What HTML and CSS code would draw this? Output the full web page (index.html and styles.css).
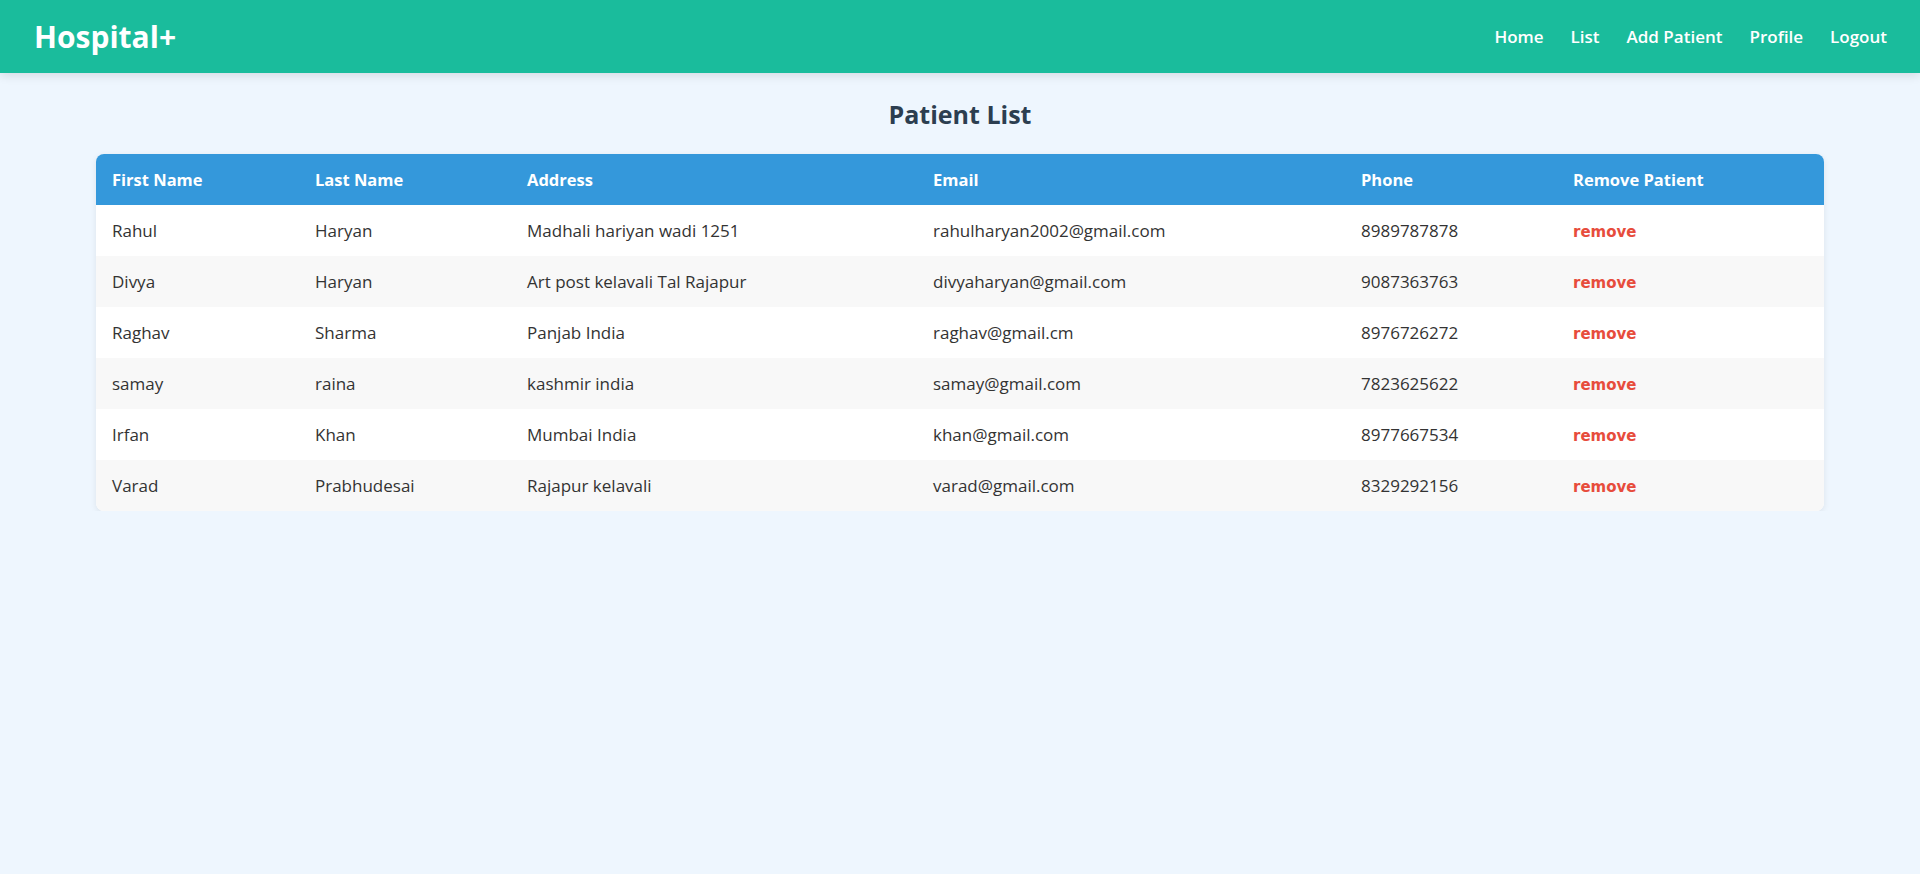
FILE: index.html
```html
<!DOCTYPE html>
<html lang="en">
<head>
<meta charset="utf-8">
<title>Patient List</title>
<link rel="stylesheet" href="styles.css">
</head>
<body>
<header class="navbar">
  <div class="brand">Hospital+</div>
  <nav class="nav-links">
    <a href="#">Home</a>
    <a href="#">List</a>
    <a href="#">Add Patient</a>
    <a href="#">Profile</a>
    <a href="#">Logout</a>
  </nav>
</header>
<main class="content">
  <h2 class="page-title">Patient List</h2>
  <div class="table-card">
    <table class="patients">
      <thead>
        <tr>
          <th class="c-first">First Name</th>
          <th class="c-last">Last Name</th>
          <th class="c-address">Address</th>
          <th class="c-email">Email</th>
          <th class="c-phone">Phone</th>
          <th class="c-remove">Remove Patient</th>
        </tr>
      </thead>
      <tbody>
        <tr><td>Rahul</td><td>Haryan</td><td>Madhali hariyan wadi 1251</td><td>rahulharyan2002@gmail.com</td><td>8989787878</td><td><a class="remove" href="#">remove</a></td></tr>
        <tr><td>Divya</td><td>Haryan</td><td>Art post kelavali Tal Rajapur</td><td>divyaharyan@gmail.com</td><td>9087363763</td><td><a class="remove" href="#">remove</a></td></tr>
        <tr><td>Raghav</td><td>Sharma</td><td>Panjab India</td><td>raghav@gmail.cm</td><td>8976726272</td><td><a class="remove" href="#">remove</a></td></tr>
        <tr><td>samay</td><td>raina</td><td>kashmir india</td><td>samay@gmail.com</td><td>7823625622</td><td><a class="remove" href="#">remove</a></td></tr>
        <tr><td>Irfan</td><td>Khan</td><td>Mumbai India</td><td>khan@gmail.com</td><td>8977667534</td><td><a class="remove" href="#">remove</a></td></tr>
        <tr><td>Varad</td><td>Prabhudesai</td><td>Rajapur kelavali</td><td>varad@gmail.com</td><td>8329292156</td><td><a class="remove" href="#">remove</a></td></tr>
      </tbody>
    </table>
  </div>
</main>
</body>
</html>
```

FILE: styles.css
```css
* { box-sizing: border-box; }

body {
  margin: 0;
  background: #eef6fe;
  font-family: "Open Sans", "Noto Sans", sans-serif;
  color: #333;
}

.navbar {
  height: 73px;
  background: #1abc9c;
  display: flex;
  align-items: center;
  justify-content: space-between;
  padding: 0 33px 0 34px;
  box-shadow: 0 2px 10px rgba(0, 0, 0, 0.12);
}

.brand {
  color: #fff;
  font-size: 30px;
  font-weight: 700;
}

.nav-links {
  display: flex;
  gap: 27px;
}

.nav-links a {
  color: #fff;
  text-decoration: none;
  font-size: 17px;
  font-weight: 600;
}

.content {
  padding-top: 23px;
}

.page-title {
  margin: 0 0 21px;
  text-align: center;
  font-size: 25px;
  line-height: 37px;
  font-weight: 700;
  color: #2c3e50;
}

.table-card {
  width: 1728px;
  margin: 0 auto;
  border-radius: 8px;
  overflow: hidden;
  background: #fff;
  box-shadow: 0 2px 6px rgba(0, 0, 0, 0.08);
}

.patients {
  width: 100%;
  border-collapse: collapse;
  table-layout: fixed;
}

.patients th,
.patients td {
  padding: 15px 16px;
  text-align: left;
  font-size: 17px;
  line-height: 21px;
  height: 51px;
}

.patients th {
  background: #3498db;
  color: #fff;
  font-weight: 700;
  font-size: 16.5px;
}

.patients td {
  color: #333;
}

.patients tbody tr {
  height: 51px;
}

.patients tbody tr:nth-child(even) {
  background: #f8f8f8;
}

.c-first { width: 203px; }
.c-last { width: 212px; }
.c-address { width: 406px; }
.c-email { width: 428px; }
.c-phone { width: 212px; }
.c-remove { width: 267px; }

.remove {
  color: #e74c3c;
  font-family: "DejaVu Sans", sans-serif;
  font-weight: 700;
  font-size: 15px;
  line-height: 15px;
  text-decoration: none;
}
```
